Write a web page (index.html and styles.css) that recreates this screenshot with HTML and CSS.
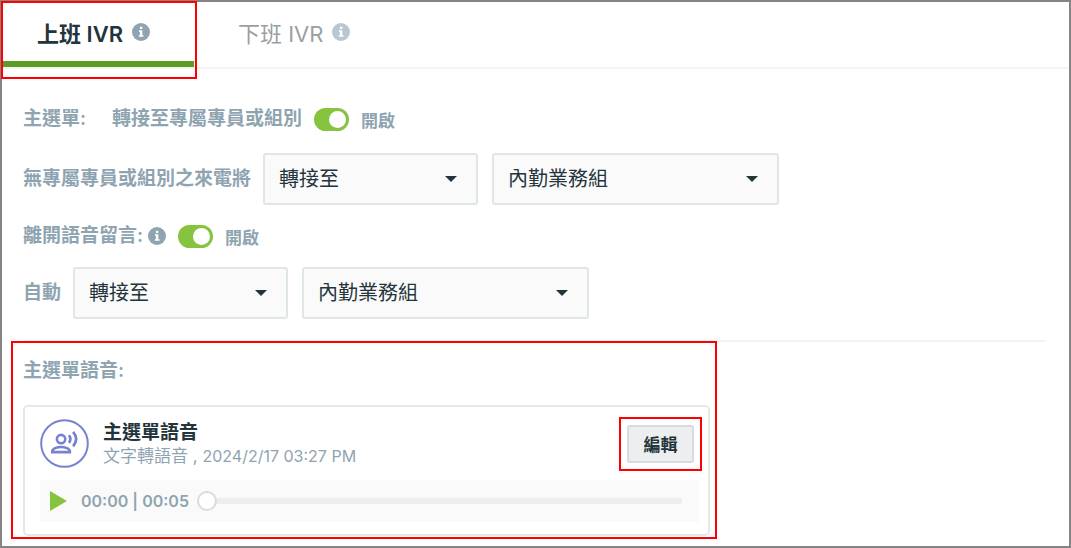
FILE: index.html
```html
<!DOCTYPE html>
<html lang="zh-Hant">
<head>
    <meta charset="UTF-8">
    <meta name="viewport" content="width=device-width, initial-scale=1.0">
    <title>IVR 設定</title>
    <link rel="stylesheet" href="styles.css">
</head>
<body>
    <div class="page">
        <div class="tabs">
            <button class="tab active" type="button">
                上班 IVR
                <svg class="info" viewBox="0 0 18 18"><circle cx="9" cy="9" r="9"/><path d="M7.9 3.8h2.4v2.1H7.9zM7 7.3h3.3v4.9h1.2v1.6H6.8v-1.6h1.1V8.9H7z" fill="#fff"/></svg>
                <span class="mark mark-tab"></span>
            </button>
            <button class="tab" type="button">
                下班 IVR
                <svg class="info" viewBox="0 0 18 18"><circle cx="9" cy="9" r="9"/><path d="M7.9 3.8h2.4v2.1H7.9zM7 7.3h3.3v4.9h1.2v1.6H6.8v-1.6h1.1V8.9H7z" fill="#fff"/></svg>
            </button>
        </div>

        <!-- Call routing -->
        <form class="settings">
            <div class="row row-menu">
                <span class="row-title">主選單:</span>
                <label for="transfer">轉接至專屬專員或組別</label>
                <input class="switch" type="checkbox" id="transfer" checked>
                <span class="state">開啟</span>
            </div>
            <div class="row">
                <label for="unassigned-action">無專屬專員或組別之來電將</label>
                <select class="action" id="unassigned-action">
                    <option>轉接至</option>
                </select>
                <select class="group" aria-label="來電組別">
                    <option>內勤業務組</option>
                </select>
            </div>
            <div class="row row-voicemail">
                <label for="voicemail">離開語音留言:</label>
                <svg class="info" viewBox="0 0 18 18"><circle cx="9" cy="9" r="9"/><path d="M7.9 3.8h2.4v2.1H7.9zM7 7.3h3.3v4.9h1.2v1.6H6.8v-1.6h1.1V8.9H7z" fill="#fff"/></svg>
                <input class="switch" type="checkbox" id="voicemail" checked>
                <span class="state">開啟</span>
            </div>
            <div class="row">
                <label for="auto-action">自動</label>
                <select class="action" id="auto-action">
                    <option>轉接至</option>
                </select>
                <select class="group" aria-label="自動轉接組別">
                    <option>內勤業務組</option>
                </select>
            </div>
        </form>

        <!-- Main menu recording -->
        <section class="voice">
            <span class="mark mark-voice"></span>
            <h2>主選單語音:</h2>
            <div class="card">
                <div class="card-head">
                    <svg class="avatar" viewBox="0 0 50 50" fill="none" stroke="#7682d0">
                        <circle cx="25" cy="25" r="23.8" stroke-width="2"/>
                        <circle cx="21.5" cy="20.5" r="4.3" stroke-width="2.6"/>
                        <path d="M12.5 33.8v-.8c0-3 5.2-4.4 9-4.4s9 1.4 9 4.4v.8z" stroke-width="2.6"/>
                        <path d="M29.6 16.6q2.8 3.9 0 7.8" stroke-width="2.8"/>
                        <path d="M33.8 13.2q6.2 7.3 0 14.6" stroke-width="2.8"/>
                    </svg>
                    <div class="info-text">
                        <h3>主選單語音</h3>
                        <p>文字轉語音 , <time datetime="2024-02-17T15:27">2024/2/17 03:27 PM</time></p>
                    </div>
                    <button class="edit" type="button">編輯<span class="mark mark-edit"></span></button>
                </div>
                <div class="player">
                    <button class="play" type="button" aria-label="播放">
                        <svg viewBox="0 0 17 20"><path d="M0 0l17 10L0 20z" fill="#86c440"/></svg>
                    </button>
                    <label for="seek">00:00 | 00:05</label>
                    <input type="range" id="seek" min="0" max="5" value="0">
                </div>
            </div>
        </section>
    </div>
</body>
</html>
```

FILE: styles.css
```css
* {
    margin: 0;
    padding: 0;
    box-sizing: border-box;
}

body {
    font-family: Inter, "Noto Sans CJK TC", sans-serif;
    font-size: 19px;
    line-height: 24px;
    color: #8fa4b1;
    background: #fff;
}

button, select {
    font-family: inherit;
    cursor: pointer;
}

.page {
    min-height: 100vh;
    border: 2px solid #858585;
}

/* Tabs */
.tabs {
    display: flex;
    height: 67px;
    border-bottom: 2px solid #f3f4f4;
}

.tab {
    position: relative;
    display: flex;
    align-items: center;
    gap: 9px;
    height: 65px;
    padding: 0 44px;
    border: none;
    border-bottom: 6px solid transparent;
    background: none;
    color: #9a9fa1;
    font-size: 22px;
}

.tab.active {
    padding-left: 35px;
    border-bottom-color: #5c9c22;
    color: #23343b;
    font-weight: 600;
}

.info {
    flex: none;
    width: 18px;
    height: 18px;
    fill: #8fa4b1;
}

.tab:not(.active) .info {
    fill: #b9c8d0;
}

/* Red highlight frames */
.mark {
    position: absolute;
    border: 2px solid #f00;
    pointer-events: none;
}

.mark-tab {
    top: -1px;
    right: -3px;
    bottom: -18px;
    left: -1px;
}

.mark-voice {
    inset: -1px -7px -3px -12px;
}

.mark-edit {
    inset: -10px;
}

/* Settings */
.settings {
    display: flex;
    flex-direction: column;
    gap: 19px;
    margin: 0 23px 0 21px;
    padding: 38px 0 21px;
    border-bottom: 2px solid #f3f5f5;
}

.row {
    display: flex;
    align-items: center;
    gap: 12px;
    min-height: 24px;
    font-weight: 600;
}

.row-menu {
    margin-bottom: 3px;
}

.row-title {
    margin-right: 14px;
}

.row-voicemail label {
    margin-right: -7px;
}

.state {
    padding-top: 3px;
    font-size: 17px;
    line-height: 20px;
}

.switch {
    appearance: none;
    display: flex;
    align-items: center;
    width: 35px;
    height: 23px;
    padding: 0 3px;
    border-radius: 12px;
    background: #cfd8dc;
    cursor: pointer;
}

.switch::before {
    content: "";
    width: 17px;
    height: 17px;
    border-radius: 50%;
    background: #fff;
}

.switch:checked {
    justify-content: flex-end;
    background: #86c440;
}

select {
    appearance: none;
    height: 52px;
    padding: 0 40px 0 14px;
    border: 2px solid #dfe6e9;
    border-radius: 3px;
    background: #fafafa url("data:image/svg+xml,%3Csvg xmlns='http://www.w3.org/2000/svg' width='12' height='6'%3E%3Cpath d='M0 0h12L6 6z' fill='%2323343b'/%3E%3C/svg%3E") no-repeat right 19px center;
    color: #23343b;
    font-size: 20px;
}

.action {
    width: 215px;
    margin-right: 2px;
}

.group {
    width: 287px;
}

/* Voice card */
.voice {
    position: relative;
    max-width: 687px;
    margin-left: 21px;
    padding-top: 17px;
}

.voice h2 {
    font-size: 19px;
    font-weight: 600;
}

.card {
    margin-top: 22px;
    padding: 12px 9px 12px 15px;
    border: 2px solid #e6e8e8;
    border-radius: 5px;
}

.card-head {
    display: flex;
    align-items: center;
    gap: 14px;
}

.avatar {
    flex: none;
    width: 49px;
    height: 49px;
}

.info-text {
    flex: 1;
}

.info-text h3 {
    color: #23343b;
    font-size: 19px;
    font-weight: 600;
}

.info-text p {
    font-size: 17px;
    line-height: 22px;
}

.info-text time {
    font-size: 16px;
}

.edit {
    position: relative;
    width: 67px;
    height: 38px;
    margin-right: 5px;
    border: 2px solid #d5dde1;
    border-radius: 3px;
    background: #eceef0;
    color: #23343b;
    font-size: 17px;
    font-weight: 600;
}

.player {
    display: flex;
    align-items: center;
    height: 42px;
    margin-top: 12px;
    padding: 0 17px 0 10px;
    background: #fafafa;
    font-size: 16px;
    font-weight: 600;
}

.play {
    display: flex;
    margin-right: 14px;
    border: none;
    background: none;
}

.play svg {
    width: 17px;
    height: 20px;
}

.player input {
    appearance: none;
    flex: 1;
    height: 20px;
    margin-left: 8px;
    background: none;
}

.player input::-webkit-slider-runnable-track {
    height: 6px;
    background: #eceef0;
}

.player input::-webkit-slider-thumb {
    appearance: none;
    width: 20px;
    height: 20px;
    margin-top: -7px;
    border: 2px solid #d9dcdd;
    border-radius: 50%;
    background: #fff;
}
```
